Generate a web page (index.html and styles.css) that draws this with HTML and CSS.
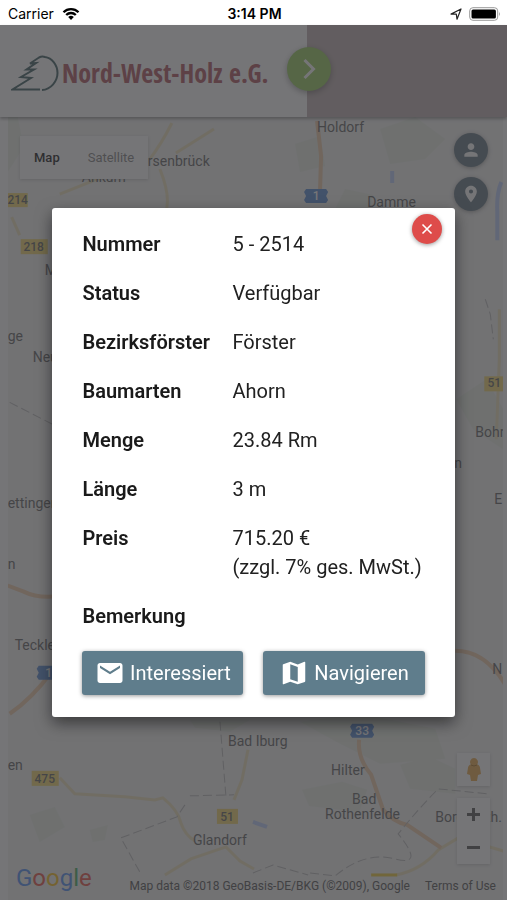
FILE: index.html
```html
<!DOCTYPE html>
<html lang="de">
<head>
  <meta charset="UTF-8">
  <meta name="viewport" content="width=device-width, initial-scale=1.0">
  <title>Nord-West-Holz e.G.</title>
  <link rel="stylesheet" href="styles.css">
</head>
<body>
  <div class="status-bar">
    <div class="carrier">
      <span>Carrier</span>
      <svg width="18" height="14" viewBox="0 0 18 14">
        <path d="M1.5 5.2a10.6 10.6 0 0 1 15 0M4.2 8a6.8 6.8 0 0 1 9.6 0" fill="none" stroke="#000" stroke-width="2.3"/>
        <path d="M9 13l-2.8-2.9a4 4 0 0 1 5.6 0z"/>
      </svg>
    </div>
    <strong class="clock">3:14 PM</strong>
    <div class="battery">
      <svg width="12" height="12" viewBox="0 0 12 12">
        <path d="M1 6.1L11 1 7 11.2 6.3 6z" fill="none" stroke="#222" stroke-width="1.2" stroke-linejoin="round"/>
      </svg>
      <svg width="32" height="14" viewBox="0 0 32 14">
        <rect x=".7" y=".7" width="28" height="12.6" rx="3.2" fill="#fff" stroke="#999" stroke-width="1"/>
        <rect x="2.5" y="2.5" width="24.4" height="9" rx="1.5"/>
        <path d="M30 4.8q1.8 2.2 0 4.4z" fill="#999"/>
      </svg>
    </div>
  </div>

  <header class="header">
    <div class="logo">
      <svg width="48" height="38" viewBox="0 0 48 38">
        <path d="M29 35.500H1.500L20 24 10 23 23 15.500 15.500 15.500 25 9 19 9.500 28 3.500Q31 2 34 3C41 4 46.500 11 46.500 19 46.500 27 40 35.500 31 36" fill="none" stroke="#2c5054" stroke-width="2"/>
      </svg>
      <span>Nord-West-Holz e.G.</span>
    </div>
    <button type="button" class="menu-toggle" aria-label="Menü">
      <svg width="44" height="44" viewBox="0 0 44 44"><path d="M17.500 13l9 9-9 9" fill="none" stroke="#fff" stroke-width="3"/></svg>
    </button>
  </header>

  <main class="map">
    <svg class="map-canvas" viewBox="8 118 495 782" preserveAspectRatio="xMidYMid slice">
      <g class="forest">
        <path d="M8 118h10l6 30-16 25zM380 130l35-12 30 22-20 20-35 5zM295 145l25-8 5 30-25 6zM345 190l28 6-5 18h-35zM456 400l30-20 17 30v40l-30-20zM300 722l60-8 75 15 10 30-65 5-40-20zM400 765l30-8 25 12v25l-45-5zM302 790l40-8 25 8-8 22-50-6zM30 815l25-8 10 20-25 15zM90 830l18-5-3 15-12 2zM190 720h60l-20 12-35-4z"/>
      </g>
      <g class="water">
        <path d="M501 183q-5 12-4 30v28M253 822l14 5M392 172v12"/>
      </g>
      <g class="road">
        <path d="M150 160q12-16 22-36M176 154l38-24M160 170q12 30 5 45M12 218l8 18M60 195l40-16M60 778l15 16 50 3 30 3 8-2q15 12 18 25 4 12 14 18M165 875l26-16 35-12 14 14 14 8M248 750l-6 30-8 20M499 310v50l-3 80M396 875q25-5 42-25l20-12 45 13"/>
        <path class="strong" d="M371 875h26"/>
      </g>
      <g class="motorway">
        <path d="M317 122l4 35-1 33M8 586l16 6q12 6 29 5M455 651q30 0 50 34M10 714q22-15 42-42M359 740q-2 18 12 35l12 35q10 12 24 15l34 23"/>
      </g>
      <g class="border-line">
        <path d="M220 722l6 75M190 796l44-1M185 805l-8 12-56 21 20 36M10 403l43 22M310 873l25 3q30-25 60-17t3-25q20-25 40-45l50 5M253 873l20-8 35 10M485 300l5 15 3 25"/>
      </g>

      <g class="place">
        <text x="317" y="133">Holdorf</text>
        <text x="367" y="208">Damme</text>
        <text x="148" y="167">rsenbrück</text>
        <text x="82" y="183">Ankum</text>
        <text x="45" y="276">M</text>
        <text x="8" y="342">ge</text>
        <text x="33" y="363">Neu</text>
        <text x="475" y="438">Bohr</text>
        <text x="8" y="509">ettingen</text>
        <text x="8" y="569">n</text>
        <text x="454" y="469">n</text>
        <text x="494" y="505">E</text>
        <text x="492" y="674">N</text>
        <text x="15" y="650">Tecklenburg</text>
        <text x="8" y="770">en</text>
        <text x="228" y="746">Bad Iburg</text>
        <text x="331" y="775">Hilter</text>
        <text x="352" y="804">Bad</text>
        <text x="325" y="819">Rothenfelde</text>
        <text x="435" y="822">Borgholzh.</text>
        <text x="193" y="845">Glandorf</text>
      </g>

      <g class="shield">
        <rect x="3" y="194" width="25" height="14"/>
        <text x="18" y="205">214</text>
        <rect x="21" y="240" width="27" height="15"/>
        <text x="34" y="252">218</text>
        <rect x="484" y="377" width="22" height="15"/>
        <text x="494" y="388">51</text>
        <rect x="32" y="771" width="27" height="15"/>
        <text x="45" y="783">475</text>
        <rect x="217" y="809" width="21" height="15"/>
        <text x="227" y="821">51</text>
      </g>
      <g class="shield-blue">
        <path d="M306 190h20l2 3-2 4 2 4-2 3h-20l-2-3 2-4-2-4zM39 666h20l2 3-2 4 2 4-2 3h-20l-2-3 2-4-2-4zM352 724h20l2 3-2 4 2 4-2 3h-20l-2-3 2-4-2-4z"/>
        <text x="316" y="201">1</text>
        <text x="49" y="677">1</text>
        <text x="362" y="735">33</text>
      </g>
    </svg>

    <div class="map-type">
      <button type="button" class="active">Map</button>
      <button type="button">Satellite</button>
    </div>

    <div class="map-actions">
      <button type="button" aria-label="Profil">
        <svg width="20" height="20" viewBox="0 0 24 24"><path d="M12 12c2.200 0 4-1.800 4-4s-1.800-4-4-4-4 1.800-4 4 1.800 4 4 4zm0 2c-2.700 0-8 1.300-8 4v2h16v-2c0-2.700-5.300-4-8-4z"/></svg>
      </button>
      <button type="button" aria-label="Standort">
        <svg width="20" height="20" viewBox="0 0 24 24"><path fill-rule="evenodd" d="M12 2C8.100 2 5 5.100 5 9c0 5.300 7 13 7 13s7-7.700 7-13c0-3.900-3.100-7-7-7zm0 9.500a2.500 2.500 0 1 1 0-5 2.500 2.500 0 0 1 0 5z"/></svg>
      </button>
    </div>

    <div class="map-controls">
      <button type="button" class="pegman" aria-label="Street View">
        <svg width="16" height="24" viewBox="0 0 16 24"><path d="M8 0a4 4 0 0 1 3.200 6.300c2 .7 2.800 2.200 3 4.700l.8 5-3 1-1 6H5l-1-6-3-1 .8-5c.2-2.500 1-4 3-4.700A4 4 0 0 1 8 0z" fill="#e8a23c"/><path d="M5 7q3 2 6 0" fill="none" stroke="#a56a10"/></svg>
      </button>
      <div class="zoom">
        <button type="button" aria-label="Vergrößern"><svg width="13" height="13" viewBox="0 0 13 13"><path d="M6.500 0v13M0 6.500h13" stroke="#444" stroke-width="3"/></svg></button>
        <button type="button" aria-label="Verkleinern"><svg width="13" height="13" viewBox="0 0 13 13"><path d="M0 6.500h13" stroke="#444" stroke-width="3"/></svg></button>
      </div>
    </div>

    <div class="map-footer">
      <span class="google"><i class="b">G</i><i class="r">o</i><i class="y">o</i><i class="b">g</i><i class="g">l</i><i class="r">e</i></span>
      <span class="copyright">Map data ©2018 GeoBasis-DE/BKG (©2009), Google</span>
      <a href="#">Terms of Use</a>
    </div>
  </main>

  <div class="overlay">
    <div class="modal" role="dialog" aria-modal="true" aria-label="Polter 5 - 2514">
      <button type="button" class="close" aria-label="Schließen">
        <svg width="12" height="12" viewBox="0 0 12 12"><path d="M1.500 1.500l9 9M10.500 1.500l-9 9" stroke="#fff" stroke-width="1.600"/></svg>
      </button>
      <dl class="details">
        <dt>Nummer</dt>
        <dd>5 - 2514</dd>
        <dt>Status</dt>
        <dd>Verfügbar</dd>
        <dt>Bezirksförster</dt>
        <dd>Förster</dd>
        <dt>Baumarten</dt>
        <dd>Ahorn</dd>
        <dt>Menge</dt>
        <dd>23.84 Rm</dd>
        <dt>Länge</dt>
        <dd>3 m</dd>
        <dt>Preis</dt>
        <dd>715.20 €<br>(zzgl. 7% ges. MwSt.)</dd>
        <dt>Bemerkung</dt>
        <dd></dd>
      </dl>
      <div class="modal-buttons">
        <button type="button">
          <svg width="30" height="30" viewBox="0 0 24 24"><path d="M20 4H4c-1.100 0-2 .9-2 2v12c0 1.100.9 2 2 2h16c1.100 0 2-.9 2-2V6c0-1.100-.9-2-2-2zm0 4l-8 5-8-5V6l8 5 8-5v2z"/></svg>
          Interessiert
        </button>
        <button type="button">
          <svg width="30" height="30" viewBox="0 0 24 24"><path d="M20.500 3l-.2 0L15 5.100 9 3 3.400 4.900c-.2.1-.4.300-.4.500V20.500c0 .3.200.5.500.5l.2 0L9 18.900l6 2.100 5.600-1.900c.2-.1.4-.3.400-.5V3.500c0-.3-.2-.5-.5-.5zM15 19l-6-2.100V5l6 2.100V19z"/></svg>
          Navigieren
        </button>
      </div>
    </div>
  </div>
</body>
</html>
```
FILE: styles.css
```css
* {
  box-sizing: border-box;
}
body {
  margin: 0;
  min-height: 100vh;
  display: flex;
  flex-direction: column;
  font-family: Roboto, Arial, sans-serif;
  background: #fff;
  color: #212121;
}
button {
  font-family: inherit;
  border: none;
  padding: 0;
  cursor: pointer;
}
svg {
  display: block;
}

/* status bar */
.status-bar {
  display: grid;
  grid-template-columns: 1fr auto 1fr;
  align-items: center;
  height: 25px;
  padding: 2px 6px 0 8px;
  font-family: Inter, sans-serif;
  font-size: 14px;
  color: #000;
}
.carrier {
  display: flex;
  align-items: center;
  gap: 8px;
}
.clock {
  font-weight: 600;
}
.battery {
  display: flex;
  align-items: center;
  justify-content: flex-end;
  gap: 7px;
}

/* header */
.header {
  display: flex;
  align-items: center;
  height: 92px;
  background: #bbaaac;
  box-shadow: 0 2px 3px rgba(0, 0, 0, 0.4);
  z-index: 1;
}
.logo {
  display: flex;
  align-items: center;
  gap: 3px;
  width: 307px;
  height: 100%;
  padding: 4px 0 0 11px;
  background: #fff;
  color: #a84450;
  font-family: "Open Sans Condensed", "Liberation Sans Narrow", "DejaVu Sans Condensed", sans-serif;
  font-size: 26px;
  font-weight: bold;
  white-space: nowrap;
}
.menu-toggle {
  width: 44px;
  height: 44px;
  margin-left: -20px;
  margin-bottom: 4px;
  border-radius: 50%;
  background: #8fc850;
  box-shadow: 0 2px 6px rgba(0, 0, 0, 0.4);
}

/* map */
.map {
  position: relative;
  flex: 1;
  margin: 0 4px 0 8px;
  background: #f2f2f0;
}
.map-canvas {
  position: absolute;
  width: 100%;
  height: 100%;
}
.forest {
  fill: #e8eee3;
}
.water,
.road,
.motorway,
.border-line {
  fill: none;
}
.water {
  stroke: #b8ccff;
  stroke-width: 4;
}
.road {
  stroke: #efe3b8;
  stroke-width: 3;
}
.road .strong {
  stroke: #efc928;
}
.motorway {
  stroke: #f0c8a2;
  stroke-width: 4;
}
.border-line {
  stroke: #b5b5b5;
  stroke-width: 1;
  stroke-dasharray: 9 4;
}
.place {
  fill: #555;
  font-size: 14px;
}
.shield rect {
  fill: #f2d561;
}
.shield text,
.shield-blue text {
  font-size: 12px;
  font-weight: 500;
  text-anchor: middle;
  fill: #555;
}
.shield-blue path {
  fill: #4a80cf;
}
.shield-blue text {
  fill: #fff;
}
.map-type {
  position: absolute;
  top: 19px;
  left: 12px;
  display: flex;
  height: 43px;
  background: #fff;
  box-shadow: 0 1px 3px rgba(0, 0, 0, 0.2);
}
.map-type button {
  padding: 0 14px;
  background: none;
  color: #777;
  font-size: 13px;
}
.map-type .active {
  color: #000;
  font-weight: 500;
}
.map-actions {
  position: absolute;
  top: 16px;
  right: 15px;
  display: grid;
  gap: 10px;
}
.map-actions button {
  display: grid;
  place-items: center;
  width: 34px;
  height: 34px;
  border-radius: 50%;
  background: #546a78;
  fill: #fff;
  box-shadow: 0 1px 4px rgba(0, 0, 0, 0.4);
}
.map-controls {
  position: absolute;
  right: 13px;
  bottom: 36px;
  display: grid;
  gap: 12px;
}
.map-controls button {
  display: grid;
  place-items: center;
  width: 33px;
  height: 33px;
  background: #fff;
}
.map-controls .pegman,
.zoom {
  box-shadow: 0 1px 3px rgba(0, 0, 0, 0.2);
}
.map-footer {
  position: absolute;
  left: 8px;
  right: 7px;
  bottom: 7px;
  display: flex;
  align-items: flex-end;
  justify-content: flex-end;
  gap: 15px;
  font-size: 12px;
  line-height: 14px;
  color: #444;
  white-space: nowrap;
}
.map-footer a {
  color: inherit;
  text-decoration: none;
}
.google {
  margin-right: auto;
  font-size: 24px;
  line-height: 30px;
}
.google i {
  font-style: normal;
}
.google .b {
  color: #4285f4;
}
.google .r {
  color: #ea4335;
}
.google .y {
  color: #fbbc05;
}
.google .g {
  color: #34a853;
}

/* modal */
.overlay {
  position: fixed;
  top: 25px;
  right: 0;
  bottom: 0;
  left: 0;
  z-index: 10;
  display: flex;
  align-items: center;
  justify-content: center;
  background: rgba(64, 64, 67, 0.72);
}
.modal {
  position: relative;
  width: 79.3%;
  padding: 22px 30px;
  border-radius: 3px;
  background: #fff;
  box-shadow: 0 6px 16px rgba(0, 0, 0, 0.5);
}
.close {
  position: absolute;
  top: 6px;
  right: 13px;
  display: grid;
  place-items: center;
  width: 30px;
  height: 30px;
  border-radius: 50%;
  background: #de4c4a;
  box-shadow: 0 1px 4px rgba(0, 0, 0, 0.4);
}
.details {
  display: grid;
  grid-template-columns: 150px 1fr;
  margin: 0;
  font-size: 20px;
  line-height: 29px;
}
.details dt {
  font-weight: 600;
  color: #1a1a1a;
}
.details dd {
  min-height: 29px;
  margin: 0 -8px 20px 0;
}
.modal-buttons {
  display: grid;
  grid-template-columns: 1fr 1fr;
  gap: 20px;
}
.modal-buttons button {
  display: flex;
  align-items: center;
  justify-content: center;
  gap: 5px;
  height: 44px;
  border-radius: 3px;
  background: #5f7d8c;
  box-shadow: 0 1px 4px rgba(0, 0, 0, 0.4);
  color: #fff;
  fill: #fff;
  font-size: 20px;
}
```
